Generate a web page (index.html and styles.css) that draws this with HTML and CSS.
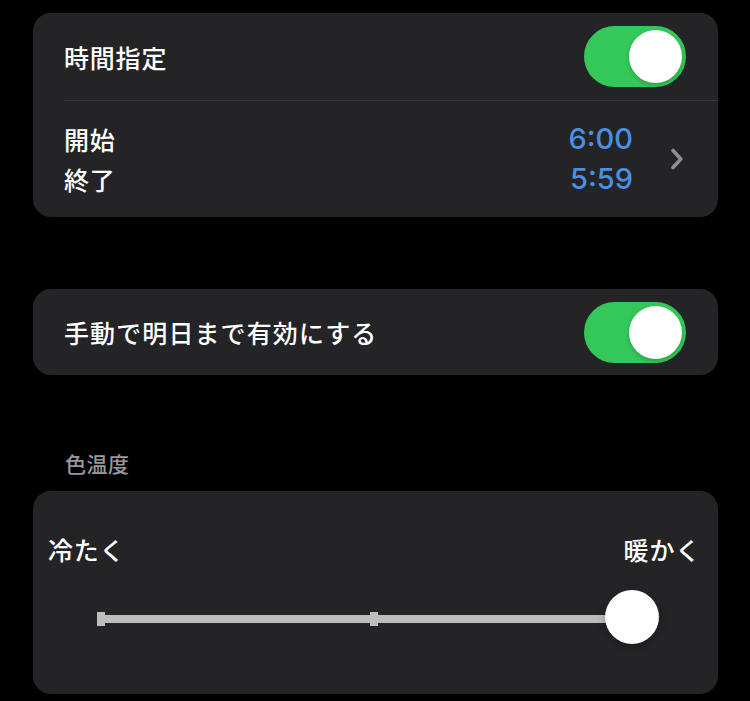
FILE: index.html
```html
<!DOCTYPE html>
<html lang="ja">
<head>
<meta charset="utf-8">
<link rel="stylesheet" href="styles.css">
</head>
<body>
<div class="page">
  <section class="card card-schedule">
    <div class="row row-toggle">
      <span class="label">時間指定</span>
      <div class="toggle on"><div class="knob"></div></div>
    </div>
    <div class="divider"></div>
    <div class="row row-times">
      <div class="times-labels">
        <span class="label">開始</span>
        <span class="label">終了</span>
      </div>
      <div class="times-values">
        <span class="time">6:00</span>
        <span class="time">5:59</span>
      </div>
      <svg class="chevron" width="14" height="22" viewBox="0 0 14 22">
        <path d="M3 2.5 L10.8 11 L3 19.5" fill="none" stroke="#8d8d92" stroke-width="3.6" stroke-linecap="round" stroke-linejoin="round"/>
      </svg>
    </div>
  </section>

  <section class="card card-manual">
    <div class="row row-toggle">
      <span class="label label-wide">手動で明日まで有効にする</span>
      <div class="toggle on"><div class="knob"></div></div>
    </div>
  </section>

  <h2 class="section-header">色温度</h2>

  <section class="card card-temp">
    <div class="temp-labels">
      <span class="label">冷たく</span>
      <span class="label">暖かく</span>
    </div>
    <div class="slider">
      <div class="track"></div>
      <div class="tick tick-start"></div>
      <div class="tick tick-mid"></div>
      <div class="slider-knob"></div>
    </div>
  </section>
</div>
</body>
</html>
```
FILE: styles.css
```css
html, body {
  margin: 0;
  padding: 0;
  background: #000;
}
body {
  font-family: "Noto Sans CJK JP", "Noto Sans", sans-serif;
  color: #fff;
}
.page {
  width: 685px;
  padding: 13px 0 0 33px;
  display: flex;
  flex-direction: column;
}
.card {
  background: #242426;
  border-radius: 18px;
  overflow: hidden;
}
.row {
  display: flex;
  align-items: center;
}
.label {
  font-size: 25px;
  font-weight: 500;
  letter-spacing: 0.8px;
  line-height: 40px;
  color: #fff;
}
.label-wide {
  letter-spacing: 1.1px;
}
.row-toggle {
  height: 87px;
  padding: 0 32px 0 31px;
  justify-content: space-between;
}
.card-manual .row-toggle {
  height: 86px;
}
.toggle {
  width: 102px;
  height: 61px;
  border-radius: 31px;
  background: #34c759;
  position: relative;
  flex-shrink: 0;
}
.toggle .knob {
  position: absolute;
  top: 4px;
  right: 4px;
  width: 53px;
  height: 53px;
  border-radius: 50%;
  background: #fff;
  box-shadow: 0 2px 4px rgba(0,0,0,0.2);
}
.divider {
  height: 1px;
  margin-left: 31px;
  background: #3a3a3c;
}
.row-times {
  height: 116px;
  padding: 0 0 0 31px;
}
.times-labels {
  display: flex;
  flex-direction: column;
  flex: 1;
}
.times-values {
  display: flex;
  flex-direction: column;
  align-items: flex-end;
}
.time {
  font-family: Inter, "Noto Sans", sans-serif;
  font-size: 29px;
  font-weight: 500;
  line-height: 40px;
  color: #4a90e2;
}
.chevron {
  margin: 0 34px 0 37px;
  display: block;
}
.card-manual {
  margin-top: 72px;
}
.section-header {
  margin: 0;
  height: 116px;
  box-sizing: border-box;
  padding: 72px 0 0 32px;
  font-size: 21px;
  font-weight: 500;
  line-height: 32px;
  color: #98989d;
  letter-spacing: 0.5px;
}
.card-temp {
  height: 203px;
  box-sizing: border-box;
  padding: 38px 17px 0 15px;
}
.temp-labels {
  display: flex;
  justify-content: space-between;
}
.slider {
  position: relative;
  height: 54px;
  margin: 21px 0 0 49px;
  width: 562px;
}
.track {
  position: absolute;
  left: 0;
  right: 20px;
  top: 25px;
  height: 8px;
  background: #bdbdbd;
}
.tick {
  position: absolute;
  top: 22px;
  width: 8px;
  height: 14px;
  background: #bdbdbd;
}
.tick-start { left: 0; }
.tick-mid { left: 273px; }
.slider-knob {
  position: absolute;
  left: 508px;
  top: 0;
  width: 54px;
  height: 54px;
  border-radius: 50%;
  background: #fff;
  box-shadow: 0 3px 8px rgba(0,0,0,0.25);
}
```
